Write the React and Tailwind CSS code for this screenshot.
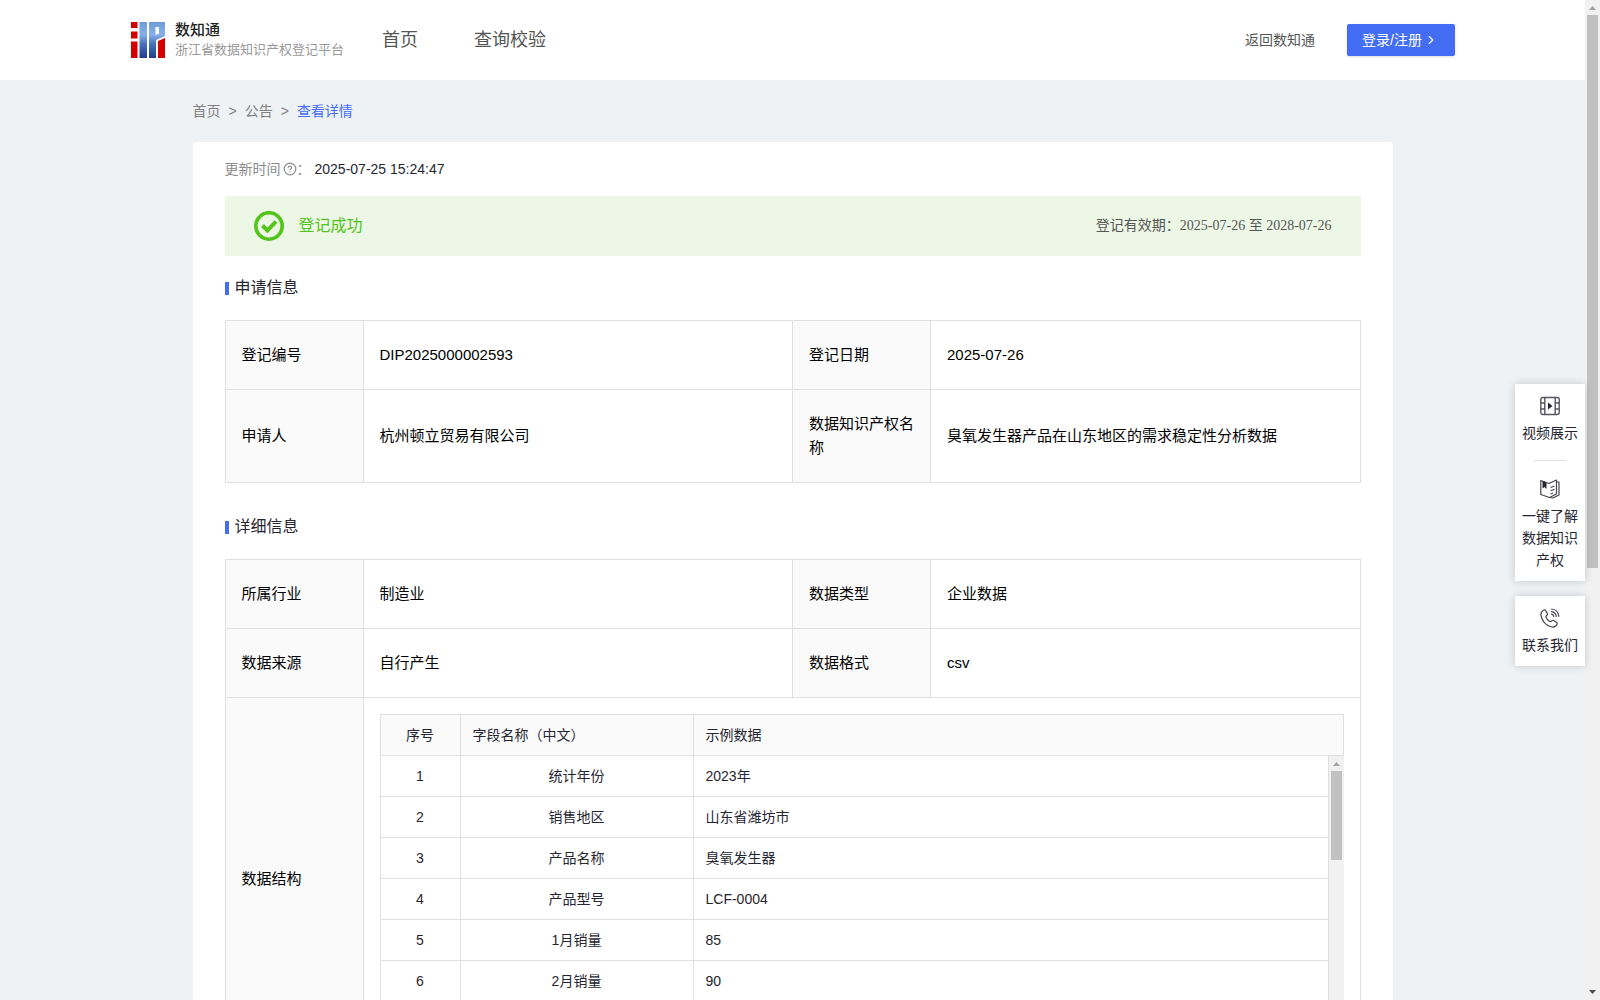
import { ChevronRight, CircleHelp } from 'lucide-react'

const fields = [
  { id: 1, name: '统计年份', sample: '2023年' },
  { id: 2, name: '销售地区', sample: '山东省潍坊市' },
  { id: 3, name: '产品名称', sample: '臭氧发生器' },
  { id: 4, name: '产品型号', sample: 'LCF-0004' },
  { id: 5, name: '1月销量', sample: '85' },
  { id: 6, name: '2月销量', sample: '90' },
]

const Logo = () => (
  <svg width="34" height="36" viewBox="0 0 34 36" aria-hidden="true">
    <defs>
      <linearGradient id="logoBlue" x1="0" y1="0" x2="0" y2="1">
        <stop offset="0" stopColor="#6f9bd8" />
        <stop offset="0.35" stopColor="#86b0e6" />
        <stop offset="0.6" stopColor="#4a74bd" />
        <stop offset="1" stopColor="#263a8c" />
      </linearGradient>
    </defs>
    <path fill="#d40000" d="M0 0h6.500v6H0zM0 9.500h6.500v7H0zM0 19.500h6.500V36H0zM27 19l7-3v20h-7z" />
    <path fill="url(#logoBlue)" fillRule="evenodd" d="M8.500 0h7.500v36H8.500zM18 0h16v14l-9 4v18h-7zM24.500 5v8l3.500-1.500V5z" />
  </svg>
)

const SuccessIcon = () => (
  <svg width="30" height="30" viewBox="0 0 30 30" fill="none" stroke="#52c41a" aria-hidden="true">
    <circle cx="15" cy="15" r="13.2" strokeWidth="3.600" />
    <path d="M8.500 14.500l5 5 8.500-9" strokeWidth="4" />
  </svg>
)

const VideoIcon = () => (
  <svg width="20" height="20" viewBox="0 0 20 20" fill="none" stroke="#55565f" strokeWidth="1.400" aria-hidden="true">
    <rect x="0.800" y="1.500" width="18.400" height="17" rx="2" />
    <path d="M4.800 1.500v17M15.200 1.500v17M0.800 7h4M0.800 13h4M15.200 7h4M15.200 13h4" />
    <path d="M8 6.500l4.500 3.500L8 13.500z" fill="#252632" stroke="none" />
  </svg>
)

const BookIcon = () => (
  <svg width="20" height="20" viewBox="0 0 20 20" fill="none" stroke="#45464f" strokeWidth="1.200" strokeLinejoin="round" aria-hidden="true">
    <path d="M0.800 1.500l8.200 3 7.500-3.500v14L9.500 18.500l-8.700-3z" />
    <path d="M17 3h2v13l-6 3-3.500-.5" />
    <path d="M2.500 2v7.500l2-1.500 2 2V3.500z" fill="#252632" stroke="none" />
    <path d="M10.500 8.500l4-1.500M10.500 11.700l4-1.500M10.500 15l2.500-1" />
  </svg>
)

const PhoneIcon = () => (
  <svg width="20" height="20" viewBox="0 0 20 20" fill="none" stroke="#45464f" strokeWidth="1.200" strokeLinecap="round" strokeLinejoin="round" aria-hidden="true">
    <path d="M3.500 2.300C1.500 3.500.7 5.200 1 7.300c1 5.500 5 10.200 11 11.700 2.200.4 4-.6 5-2.700.4-.9.200-1.500-.5-2l-3-1.800c-.8-.4-1.300-.3-1.800.3-.8 1-1.500 1-2.400.4-1.500-1-2.600-2.300-3.300-3.900-.3-.8-.2-1.300.6-1.900.8-.5 1-1 .7-1.900L6 2.900c-.5-1.100-1.400-1.200-2.500-.6z" />
    <path d="M11.500 1c4 .3 7 3.300 7.300 7.300M11.500 3.600c2.600.3 4.400 2.200 4.700 4.800M11.500 6.200c1.200.2 2 1 2.200 2.200" />
  </svg>
)

const SectionTitle = ({ children }) => (
  <h2 className="flex h-16 items-center gap-1.5 text-base text-[#252632]">
    <span className="h-[13px] w-1 bg-[#446df6]" />
    {children}
  </h2>
)

const Label = ({ children }) => (
  <th scope="row" className="border border-[#e0e0e0] bg-[#fafafa] px-4 py-[22px] text-left font-normal">
    {children}
  </th>
)

const Value = ({ children }) => (
  <td className="border border-[#e0e0e0] px-4 py-[22px]">{children}</td>
)

const InfoTable = ({ children }) => (
  <table className="w-full table-fixed border-collapse text-[15px] leading-6 text-black">
    <colgroup>
      <col className="w-[138px]" />
      <col />
      <col className="w-[138px]" />
      <col />
    </colgroup>
    <tbody>{children}</tbody>
  </table>
)

const FieldCols = () => (
  <colgroup>
    <col className="w-20" />
    <col className="w-[233px]" />
    <col />
  </colgroup>
)

const FieldTable = () => (
  <div className="text-sm leading-5 text-[#252632]">
    <table className="w-full table-fixed border-collapse bg-[#fafafa]">
      <FieldCols />
      <thead>
        <tr className="h-[41px]">
          <th className="border border-[#e0e0e0] px-3 text-center font-normal">序号</th>
          <th className="border border-[#e0e0e0] px-3 text-left font-normal">字段名称（中文）</th>
          <th className="border border-[#e0e0e0] px-3 text-left font-normal">示例数据</th>
        </tr>
      </thead>
    </table>
    <div className="flex h-[288px]">
      <div className="flex-1 overflow-y-auto [scrollbar-width:none]">
        <table className="w-full table-fixed border-collapse">
          <FieldCols />
          <tbody>
            {fields.map((field) => (
              <tr key={field.id} className="h-[41px] first:h-10">
                <td className="border border-t-0 border-[#e0e0e0] px-3 text-center">{field.id}</td>
                <td className="border border-t-0 border-[#e0e0e0] px-3 text-center">{field.name}</td>
                <td className="border border-t-0 border-[#e0e0e0] px-3">{field.sample}</td>
              </tr>
            ))}
          </tbody>
        </table>
      </div>
      <div className="flex w-[15px] flex-col items-center bg-[#f1f1f1]">
        <svg width="15" height="15" viewBox="0 0 15 15" fill="#a3a3a3" aria-hidden="true">
          <path d="M4 10h7L7.500 6z" />
        </svg>
        <div className="h-[89px] w-[11px] bg-[#c1c1c1]" />
      </div>
    </div>
  </div>
)

const Header = () => (
  <header className="flex h-20 items-center bg-white pr-[130px] pl-[131px]">
    <a href="#" className="flex items-center gap-2.5">
      <Logo />
      <span className="flex flex-col">
        <span className="text-[15px] leading-5 font-medium text-[#222222]">数知通</span>
        <span className="text-[13px] leading-5 text-[#999999]">浙江省数据知识产权登记平台</span>
      </span>
    </a>
    <nav className="ml-[38px] flex gap-14 text-lg text-[#555555]">
      <a href="#">首页</a>
      <a href="#">查询校验</a>
    </nav>
    <div className="ml-auto flex items-center gap-8 text-sm">
      <a href="#" className="text-[#555555]">返回数知通</a>
      <button type="button" className="flex h-8 w-[108px] items-center gap-0.5 rounded-xs bg-[#446df6] pl-[15px] text-white shadow-sm">
        登录/注册
        <ChevronRight className="size-3.5" />
      </button>
    </div>
  </header>
)

const SideBar = () => (
  <aside className="absolute top-[384px] right-[15px] flex w-[70px] flex-col gap-[15px] text-center text-sm leading-[22px] text-[#252632]">
    <div className="flex flex-col items-center bg-white px-1.5 pt-3 pb-2.5 shadow-[0_0_8px_rgba(0,0,0,0.18)]">
      <a href="#" className="flex flex-col items-center gap-1.5 pb-4">
        <VideoIcon />
        视频展示
      </a>
      <span className="h-px w-8 bg-[#e0e0e0]" />
      <a href="#" className="flex flex-col items-center gap-1.5 pt-[18px]">
        <BookIcon />
        一键了解数据知识产权
      </a>
    </div>
    <a href="#" className="flex flex-col items-center gap-1.5 bg-white px-1.5 pt-3 pb-2.5 shadow-[0_0_8px_rgba(0,0,0,0.18)]">
      <PhoneIcon />
      联系我们
    </a>
  </aside>
)

const PageScrollbar = () => (
  <div className="flex w-[15px] flex-col items-center bg-[#f1f1f1]">
    <svg width="15" height="15" viewBox="0 0 15 15" fill="#a3a3a3" aria-hidden="true">
      <path d="M4 10h7L7.500 6z" />
    </svg>
    <div className="min-h-0 w-full flex-1 px-0.5">
      <div className="h-[57%] bg-[#c1c1c1]" />
    </div>
    <svg width="15" height="15" viewBox="0 0 15 15" fill="#505050" aria-hidden="true">
      <path d="M4 5h7L7.500 9z" />
    </svg>
  </div>
)

const App = () => {
  return (
    <div className="relative flex h-screen overflow-hidden bg-[#eef2f5] font-['Liberation_Sans','Noto_Sans_CJK_SC',sans-serif]">
      <div className="flex-1 overflow-y-auto [scrollbar-width:none]">
        <Header />
        <main className="mx-auto max-w-[1200px]">
          <nav className="flex h-[62px] items-center gap-2 text-sm text-[#808080]">
            <a href="#">首页</a>
            <span>&gt;</span>
            <a href="#">公告</a>
            <span>&gt;</span>
            <a href="#" className="text-[#446df6]">查看详情</a>
          </nav>

          <div className="rounded-sm bg-white px-8 pb-8">
            <div className="flex h-[54px] items-center text-sm text-[#252632]">
              <span className="flex items-center text-[#8c8c8c]">
                更新时间
                <CircleHelp className="ml-0.5 size-3.5" />
                ：
              </span>
              <span className="ml-1">2025-07-25 15:24:47</span>
            </div>

            {/* Registration status */}
            <div className="flex h-[60px] items-center gap-[15px] bg-[#ecf7e6] px-[29px]">
              <SuccessIcon />
              <span className="text-base text-[#52c41a]">登记成功</span>
              <span className="ml-auto font-['Liberation_Serif','Noto_Sans_CJK_SC',serif] text-sm text-[#555555]">
                登记有效期：2025-07-26 至 2028-07-26
              </span>
            </div>

            <SectionTitle>申请信息</SectionTitle>
            <InfoTable>
              <tr>
                <Label>登记编号</Label>
                <Value>DIP2025000002593</Value>
                <Label>登记日期</Label>
                <Value>2025-07-26</Value>
              </tr>
              <tr>
                <Label>申请人</Label>
                <Value>杭州顿立贸易有限公司</Value>
                <Label>数据知识产权名称</Label>
                <Value>臭氧发生器产品在山东地区的需求稳定性分析数据</Value>
              </tr>
            </InfoTable>

            <div className="mt-3">
              <SectionTitle>详细信息</SectionTitle>
              <InfoTable>
                <tr>
                  <Label>所属行业</Label>
                  <Value>制造业</Value>
                  <Label>数据类型</Label>
                  <Value>企业数据</Value>
                </tr>
                <tr>
                  <Label>数据来源</Label>
                  <Value>自行产生</Value>
                  <Label>数据格式</Label>
                  <Value>csv</Value>
                </tr>
                <tr>
                  <Label>数据结构</Label>
                  <td colSpan={3} className="border border-[#e0e0e0] p-4">
                    <FieldTable />
                  </td>
                </tr>
              </InfoTable>
            </div>
          </div>
        </main>
      </div>
      <PageScrollbar />
      <SideBar />
    </div>
  )
}

export default App
